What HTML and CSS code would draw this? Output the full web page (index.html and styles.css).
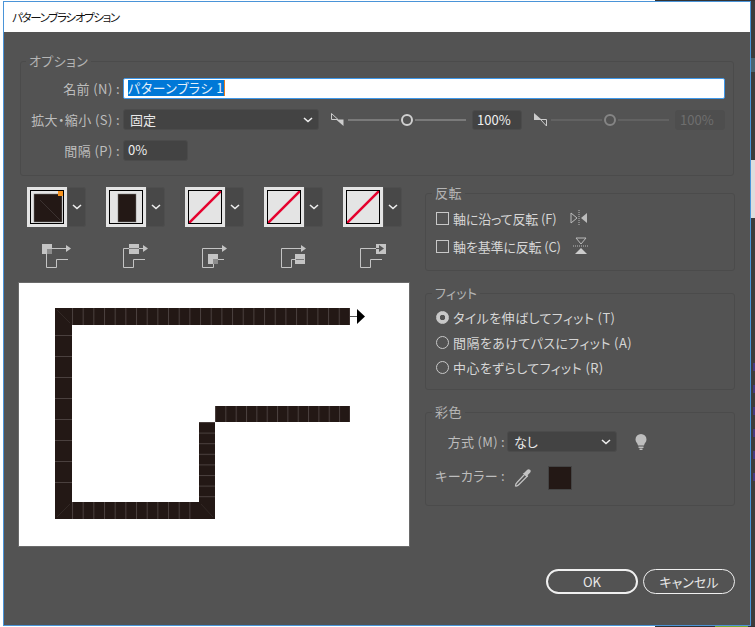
FILE: index.html
```html
<!DOCTYPE html>
<html lang="ja">
<head>
    <meta charset="UTF-8">
    <meta name="viewport" content="width=device-width, initial-scale=1.0">
    <title>パターンブラシオプション</title>
    <link rel="stylesheet" href="styles.css">
</head>
<body>
    <div class="dialog">
        <div class="titlebar">パターンブラシオプション</div>
        <div class="content">
            <fieldset class="group options">
                <legend>オプション</legend>
                <div class="row">
                    <label class="row-label">名前 (N) :</label>
                    <div class="name-input"><span class="selected">パターンブラシ 1</span></div>
                </div>
                <div class="row">
                    <label class="row-label">拡大・縮小 (S) :</label>
                    <div class="select scale-select"><span>固定</span>
                        <svg class="chev" width="10" height="6" viewBox="0 0 10 6"><path d="M1 1l4 3.500L9 1" fill="none" stroke="#eee" stroke-width="1.600"/></svg>
                    </div>
                    <svg class="wedge" width="14" height="14" viewBox="0 0 14 14"><path d="M.5 .5V6.500H7z" fill="none" stroke="#ccc"/><path d="M5 6.500h7.500V13z" fill="#ccc"/></svg>
                    <div class="slider">
                        <i class="track"></i><b class="knob"></b><i class="track"></i>
                    </div>
                    <div class="num">100%</div>
                    <svg class="wedge wedge-2" width="14" height="14" viewBox="0 0 14 14"><path d="M0 0V7h8z" fill="#ccc"/><path d="M6.500 6.500h6V13z" fill="none" stroke="#ccc"/></svg>
                    <div class="slider slider-off">
                        <i class="track"></i><b class="knob"></b><i class="track"></i>
                    </div>
                    <div class="num num-off">100%</div>
                </div>
                <div class="row">
                    <label class="row-label">間隔 (P) :</label>
                    <div class="num spacing">0%</div>
                </div>
            </fieldset>

            <div class="columns">
                <div class="left">
                    <div class="tiles">
                        <div class="tile-col">
                            <div class="tile">
                                <div class="swatch"><svg width="34" height="34" viewBox="0 0 32 32"><rect x="3" y="3" width="28" height="28" fill="#231815" stroke="#777" stroke-width=".5"/><path d="M9 9l20 20" stroke="#3b3230"/></svg><em class="corner"></em></div>
                                <div class="drop"><svg width="10" height="6" viewBox="0 0 10 6"><path d="M1 1l4 3.500L9 1" fill="none" stroke="#eee" stroke-width="1.600"/></svg></div>
                            </div>
                            <svg class="pos" width="30" height="24" viewBox="0 0 30 24"><path d="M10 4.500H25M4.500 10V23.500H14.500V15.500H26" fill="none" stroke="#c4c4c4"/><path d="M24 1l5 3.500-5 3.500z" fill="#c4c4c4"/><rect width="10" height="10" fill="#c4c4c4"/><rect x="5" y="5" width="5" height="5" fill="#8c8c8c"/></svg>
                        </div>
                        <div class="tile-col">
                            <div class="tile">
                                <div class="swatch"><svg width="34" height="34" viewBox="0 0 32 32"><rect x="8" y="3" width="18" height="28" fill="#231815" stroke="#777" stroke-width=".5"/></svg></div>
                                <div class="drop"><svg width="10" height="6" viewBox="0 0 10 6"><path d="M1 1l4 3.500L9 1" fill="none" stroke="#eee" stroke-width="1.600"/></svg></div>
                            </div>
                            <svg class="pos" width="30" height="24" viewBox="0 0 30 24"><path d="M2.500 4.500H24M2.500 4.500V23.500H12.500V15.500H24" fill="none" stroke="#c4c4c4"/><path d="M22 1l5 3.500-5 3.500z" fill="#c4c4c4"/><rect x="8" width="10" height="10" fill="#c4c4c4"/><path d="M8 4.500h10" stroke="#777"/></svg>
                        </div>
                        <div class="tile-col">
                            <div class="tile">
                                <div class="swatch"><svg width="34" height="34" viewBox="0 0 32 32"><path d="M0 32L32 0" stroke="#e5002d" stroke-width="2.500"/></svg></div>
                                <div class="drop"><svg width="10" height="6" viewBox="0 0 10 6"><path d="M1 1l4 3.500L9 1" fill="none" stroke="#eee" stroke-width="1.600"/></svg></div>
                            </div>
                            <svg class="pos" width="30" height="24" viewBox="0 0 30 24"><path d="M2.500 4.500H24M2.500 4.500V23.500H13.500V15.500H24" fill="none" stroke="#c4c4c4"/><path d="M22 1l5 3.500-5 3.500z" fill="#c4c4c4"/><rect x="8" y="10" width="10" height="10" fill="#c4c4c4"/><rect x="13" y="15" width="5" height="5" fill="#8c8c8c"/></svg>
                        </div>
                        <div class="tile-col">
                            <div class="tile">
                                <div class="swatch"><svg width="34" height="34" viewBox="0 0 32 32"><path d="M0 32L32 0" stroke="#e5002d" stroke-width="2.500"/></svg></div>
                                <div class="drop"><svg width="10" height="6" viewBox="0 0 10 6"><path d="M1 1l4 3.500L9 1" fill="none" stroke="#eee" stroke-width="1.600"/></svg></div>
                            </div>
                            <svg class="pos" width="30" height="24" viewBox="0 0 30 24"><path d="M2.500 4.500H24M2.500 4.500V23.500H12.500V15.500H16" fill="none" stroke="#c4c4c4"/><path d="M22 1l5 3.500-5 3.500z" fill="#c4c4c4"/><rect x="16" y="10" width="10" height="10" fill="#c4c4c4"/><path d="M17 15.500h8" stroke="#777"/></svg>
                        </div>
                        <div class="tile-col">
                            <div class="tile">
                                <div class="swatch"><svg width="34" height="34" viewBox="0 0 32 32"><path d="M0 32L32 0" stroke="#e5002d" stroke-width="2.500"/></svg></div>
                                <div class="drop"><svg width="10" height="6" viewBox="0 0 10 6"><path d="M1 1l4 3.500L9 1" fill="none" stroke="#eee" stroke-width="1.600"/></svg></div>
                            </div>
                            <svg class="pos" width="30" height="24" viewBox="0 0 30 24"><path d="M2.500 4.500H18M2.500 4.500V23.500H12.500V15.500H24" fill="none" stroke="#c4c4c4"/><rect x="18" width="10" height="10" fill="#c4c4c4"/><path d="M18 4.500h4" stroke="#555"/><path d="M21 1l5 3.500-5 3.500z" fill="#555"/></svg>
                        </div>
                    </div>
                    <div class="preview">
                        <svg width="390" height="263" viewBox="0 0 390 263">
                            <defs>
                                <pattern id="seamTop" patternUnits="userSpaceOnUse" x="53" y="0" width="10.670" height="20"><rect width="1" height="20" fill="#4a403e"/></pattern>
                                <pattern id="seamUpper" patternUnits="userSpaceOnUse" x="196" y="0" width="10.340" height="20"><rect width="1" height="20" fill="#4a403e"/></pattern>
                                <pattern id="seamLeft" patternUnits="userSpaceOnUse" x="0" y="52" width="20" height="21"><rect width="20" height="1" fill="#4a403e"/></pattern>
                                <pattern id="seamRight" patternUnits="userSpaceOnUse" x="0" y="139" width="20" height="10.600"><rect width="20" height="1" fill="#4a403e"/></pattern>
                            </defs>
                            <path d="M36 25H331V42H53V219H180V139H196V123H331V139H196V236H36z" fill="#231815"/>
                            <rect x="53" y="25" width="278" height="17" fill="url(#seamTop)"/>
                            <rect x="53" y="219" width="128" height="17" fill="url(#seamTop)"/>
                            <rect x="196" y="123" width="135" height="16" fill="url(#seamUpper)"/>
                            <rect x="36" y="52" width="17" height="167" fill="url(#seamLeft)"/>
                            <rect x="180" y="139" width="16" height="80" fill="url(#seamRight)"/>
                            <path d="M38 27l13 13M38 234l13-13M182 221l12 13" stroke="#322825" fill="none"/>
                            <path d="M331 33.500h8" stroke="#555" fill="none"/>
                            <path d="M338 26l8 7.500-8 7.500z" fill="#000"/>
                        </svg>
                    </div>
                </div>
                <div class="right">
                    <fieldset class="group flip">
                        <legend>反転</legend>
                        <div class="check-row">
                            <span class="check"></span><span class="opt-text">軸に沿って反転 (F)</span>
                            <svg class="flip-v" width="18" height="16" viewBox="0 0 18 16"><path d="M1 3l6 5-6 5z" fill="none" stroke="#bbb"/><path d="M17 3l-6 5 6 5z" fill="#bbb"/><path d="M9 0v16" stroke="#bbb" stroke-dasharray="1 1"/></svg>
                        </div>
                        <div class="check-row">
                            <span class="check"></span><span class="opt-text">軸を基準に反転 (C)</span>
                            <svg class="flip-h" width="16" height="18" viewBox="0 0 16 18"><path d="M3 1h10l-5 6z" fill="none" stroke="#bbb"/><path d="M2 17h12L8 11z" fill="#ccc"/><path d="M0 9h16" stroke="#bbb" stroke-dasharray="1 1"/></svg>
                        </div>
                    </fieldset>
                    <fieldset class="group fit">
                        <legend>フィット</legend>
                        <div class="radio-row"><span class="radio on"></span><span class="opt-text">タイルを伸ばしてフィット (T)</span></div>
                        <div class="radio-row"><span class="radio"></span><span class="opt-text">間隔をあけてパスにフィット (A)</span></div>
                        <div class="radio-row"><span class="radio"></span><span class="opt-text">中心をずらしてフィット (R)</span></div>
                    </fieldset>
                    <fieldset class="group color">
                        <legend>彩色</legend>
                        <div class="color-row">
                            <label class="color-label">方式 (M) :</label>
                            <div class="select method-select"><span>なし</span>
                                <svg class="chev" width="10" height="6" viewBox="0 0 10 6"><path d="M1 1l4 3.500L9 1" fill="none" stroke="#eee" stroke-width="1.600"/></svg>
                            </div>
                            <svg class="bulb" width="12" height="16" viewBox="0 0 12 16"><path d="M6 0a5.500 5.500 0 0 0-5.500 5.500c0 2.500 2 3.500 2.500 6h6c.5-2.500 2.500-3.500 2.500-6A5.500 5.500 0 0 0 6 0z" fill="#bdbdbd"/><path d="M3.500 12.500h5v1.500h-5zM4.500 14.500h3V16h-3z" fill="#bdbdbd"/></svg>
                        </div>
                        <div class="color-row key-row">
                            <label class="color-label">キーカラー :</label>
                            <svg class="dropper" width="18" height="20" viewBox="0 0 18 20"><path d="M11 6L3 14.500c-1 1-1.500 2.500-1.500 3.500.9.300 2.400-.3 3.500-1.500L13 8.500z" fill="none" stroke="#c4c4c4" stroke-width="1.200"/><path d="M10 5l3-3c1-1 2-1 3-.3s.9 2 0 3l-2.500 2.500.8.800-1.300 1.300-4.300-4.300z" fill="#c4c4c4"/></svg>
                            <div class="key-swatch"></div>
                        </div>
                    </fieldset>
                    <div class="buttons">
                        <button class="btn btn-ok">OK</button>
                        <button class="btn">キャンセル</button>
                    </div>
                </div>
            </div>
        </div>
    </div>
</body>
</html>
```

FILE: styles.css
```css
html, body {
    margin: 0;
    height: 100%;
    overflow: hidden;
}
body {
    background:
        linear-gradient(#7ca82e, #7ca82e) 715px 626px / 33px 1px no-repeat,
        linear-gradient(#333, #333) 655px 626px / 100px 1px no-repeat,
        linear-gradient(#333, #333) 655px 0 / 100px 1px no-repeat,
        linear-gradient(#ddd, #ddd) 751px 160px / 4px 58px no-repeat,
        linear-gradient(#4a6470, #4a6470) 751px 58px / 4px 14px no-repeat,
        repeating-linear-gradient(#453b80 0 8px, transparent 8px 22px) 753px 363px / 2px 132px no-repeat,
        linear-gradient(#3c3c3c, #3c3c3c) 751px 0 / 4px 627px no-repeat,
        #fff;
    font-family: "Noto Sans CJK JP", "Liberation Sans", sans-serif;
    font-size: 13px;
    font-feature-settings: "palt";
    color: #c8c8c8;
}
.dialog {
    width: 748px;
    height: 625px;
    margin: 1px 0 0 3px;
    border: 1px solid #4a94d8;
    box-sizing: border-box;
    display: flex;
    flex-direction: column;
}
.titlebar {
    height: 30px;
    flex: none;
    background: #fff;
    color: #111;
    font-size: 11.500px;
    letter-spacing: -1.300px;
    line-height: 30px;
    padding-left: 8px;
}
.content {
    flex: 1;
    background: #535353;
    padding: 22px 15px 0 15px;
}
.group {
    margin: 0;
    padding: 0;
    border: 1px solid #4b4b4b;
    border-radius: 3px;
    min-width: 0;
    box-sizing: border-box;
}
.group legend {
    margin-left: 5px;
    padding: 0 3px;
    font-size: 13px;
    letter-spacing: .4px;
    line-height: 14px;
    color: #b4b4b4;
}
.options {
    height: 122px;
    margin-left: 1px;
    width: 714px;
    padding-top: 10px;
}
.row {
    display: flex;
    align-items: center;
    height: 21px;
    margin-bottom: 10px;
}
.row-label {
    width: 102px;
    text-align: right;
    padding-right: 3px;
    box-sizing: border-box;
    white-space: nowrap;
    letter-spacing: .4px;
    color: #bdbdbd;
}
.name-input {
    width: 602px;
    height: 21px;
    box-sizing: border-box;
    background: #fff;
    border: 1px solid #3f97e8;
    border-radius: 2px;
    padding: 1px 0 0 4px;
    line-height: 16px;
}
.selected {
    background: #0078d7;
    color: #e6f0fa;
    display: inline-block;
    height: 16px;
    letter-spacing: .5px;
    border-right: 1px solid #e87b1e;
}
.select {
    height: 21px;
    box-sizing: border-box;
    background: #434343;
    border: 1px solid #4b4b4b;
    border-radius: 3px;
    color: #e8e8e8;
    display: flex;
    align-items: center;
    justify-content: space-between;
    padding: 0 5px 0 6px;
}
.scale-select {
    width: 196px;
}
.wedge {
    margin-left: 12px;
}
.slider {
    display: flex;
    align-items: center;
    width: 118px;
    margin-left: 3px;
}
.slider-off {
    opacity: .4;
}
.track {
    flex: 1;
    height: 2px;
    background: #7a7a7a;
}
.knob {
    width: 12px;
    height: 12px;
    box-sizing: border-box;
    border: 2px solid #d0d0d0;
    border-radius: 50%;
    margin: 0 2px;
}
.num {
    height: 20px;
    box-sizing: border-box;
    background: #434343;
    border: 1px solid #4b4b4b;
    border-radius: 3px;
    color: #f0f0f0;
    padding-left: 4px;
    line-height: 18px;
    width: 50px;
    margin-left: 6px;
}
.num-off {
    background: #4e4e4e;
    border-color: #4e4e4e;
    color: #6e6e6e;
}
.spacing {
    width: 65px;
    height: 21px;
    margin-left: 0;
}
.columns {
    display: flex;
    margin-top: 11px;
}
.left {
    width: 391px;
    flex: none;
}
.tiles {
    display: flex;
    padding-left: 8px;
    gap: 20px;
}
.tile-col {
    display: flex;
    flex-direction: column;
    width: 59px;
}
.tile {
    display: flex;
    height: 40px;
}
.swatch {
    width: 40px;
    height: 40px;
    box-sizing: border-box;
    background: #e4e4e4;
    padding: 3px;
    position: relative;
}
.swatch svg {
    display: block;
    box-sizing: border-box;
    border: 1px solid #000;
}
.corner {
    position: absolute;
    top: 4px;
    right: 4px;
    width: 5px;
    height: 5px;
    background: #f7931e;
}
.drop {
    width: 18px;
    height: 40px;
    margin-left: 1px;
    box-sizing: border-box;
    background: #484848;
    border: 1px solid #4e4e4e;
    border-left: none;
    border-radius: 0 3px 3px 0;
    display: flex;
    align-items: center;
    justify-content: center;
}
.pos {
    margin: 17px 0 0 15px;
}
.preview {
    width: 390px;
    height: 263px;
    margin-top: 15px;
    background: #fff;
    outline: 1px solid #6a6a6a;
}
.preview svg {
    display: block;
}
.right {
    width: 310px;
    margin: -1px 0 0 15px;
}
.right .group legend {
    margin-left: 6px;
}
.flip {
    height: 85px;
}
.fit {
    height: 104px;
    margin-top: 15px;
}
.color {
    height: 101px;
    margin-top: 15px;
}
.check-row,
.radio-row {
    display: flex;
    align-items: center;
    padding-left: 10px;
    color: #d6d6d6;
}
.check-row {
    height: 28px;
    margin-top: 4px;
    letter-spacing: -.15px;
}
.check-row + .check-row {
    margin-top: 0;
}
.radio-row {
    height: 25px;
    margin-top: 5px;
    letter-spacing: .4px;
}
.radio-row + .radio-row {
    margin-top: 0;
}
.check {
    width: 11px;
    height: 11px;
    border: 1px solid #c8c8c8;
    margin-right: 4px;
}
.radio {
    width: 11px;
    height: 11px;
    border: 1px solid #c8c8c8;
    border-radius: 50%;
    margin-right: 4px;
}
.radio.on {
    background: radial-gradient(circle, #535353 0 2.500px, #c8c8c8 3px);
    border-color: #c8c8c8;
}
.flip-v {
    margin-left: 14px;
}
.flip-h {
    margin-left: 12px;
}
.color-row {
    display: flex;
    align-items: center;
    height: 21px;
    margin-top: 12px;
}
.key-row {
    height: 24px;
    margin-top: 14px;
}
.key-row .color-label {
    margin-bottom: 6px;
}
.color-label {
    width: 81px;
    text-align: right;
    padding-right: 2px;
    box-sizing: border-box;
    white-space: nowrap;
    letter-spacing: .3px;
    color: #bdbdbd;
}
.method-select {
    width: 110px;
}
.bulb {
    margin-left: 18px;
}
.dropper {
    margin-left: 7px;
}
.key-swatch {
    width: 24px;
    height: 24px;
    box-sizing: border-box;
    background: #231815;
    border: 1px solid #444;
    margin-left: 16px;
}
.buttons {
    display: flex;
    justify-content: flex-end;
    gap: 5px;
    margin-top: 63px;
}
.btn {
    width: 92px;
    height: 25px;
    background: none;
    border: 1px solid #f0f0f0;
    border-radius: 13px;
    color: #e8e8e8;
    font-family: inherit;
    font-size: 13px;
    font-feature-settings: "palt";
    padding: 0;
}
.btn-ok {
    border-width: 2px;
}
```
